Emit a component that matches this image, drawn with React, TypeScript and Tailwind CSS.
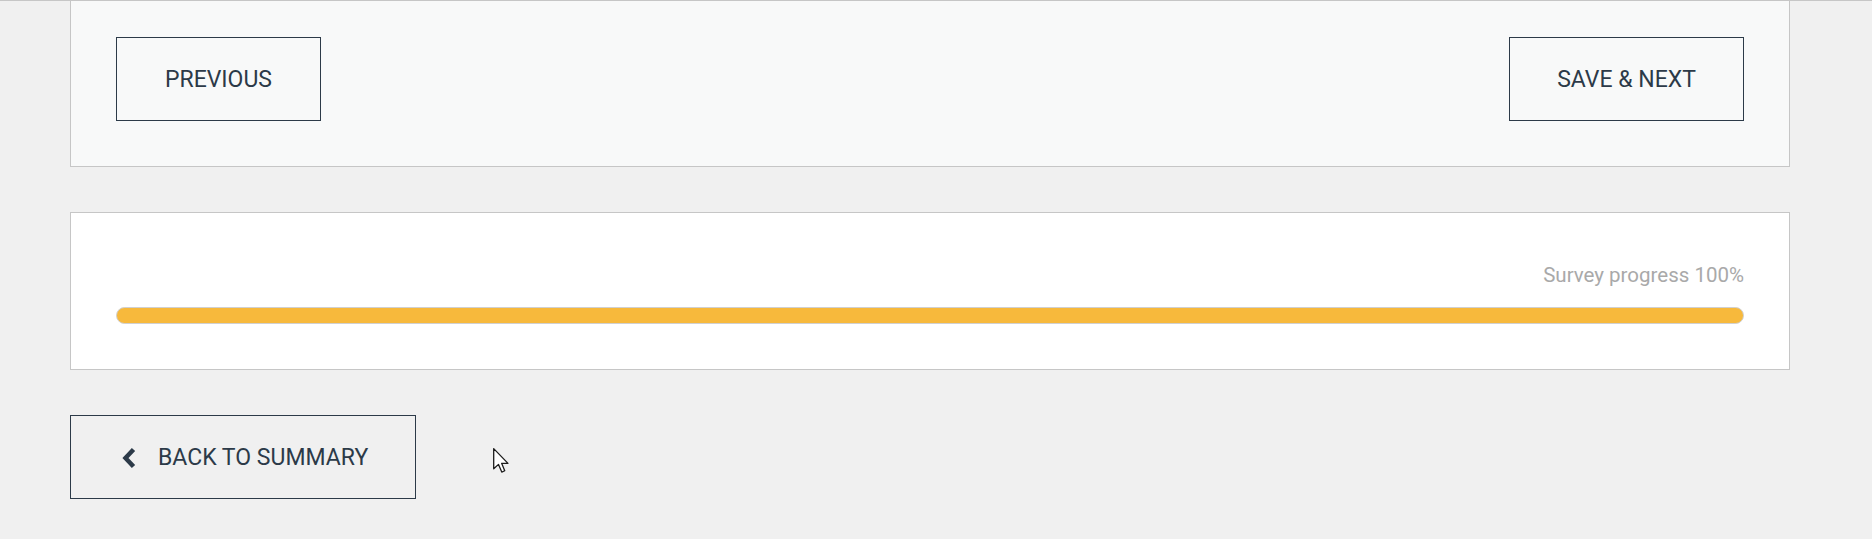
import React from "react";

const font = { fontFamily: "Roboto, 'Open Sans', sans-serif" };

const OutlineButton: React.FC<{ label: string; width: string }> = ({ label, width }) => (
  <button
    className={`flex h-[84px] items-center justify-center border border-[#2c3a48] pt-[2px] text-[23px] text-[#2c3a48] ${width}`}
  >
    {label}
  </button>
);

const Cursor = () => (
  <svg
    className="absolute left-[423px] top-[33px]"
    width="17"
    height="26"
    viewBox="0 0 13 20"
  >
    <path
      d="M0.5 0.5 L0.5 16 L4.2 12.6 L6.7 18.5 L9 17.5 L6.6 11.8 L11.5 11.8 Z"
      fill="#ffffff"
      stroke="#1c1c1c"
      strokeWidth="1"
      strokeLinejoin="round"
    />
  </svg>
);

export default function App() {
  return (
    <div className="min-h-[539px] border-t border-[#c6c6c6] bg-[#f0f0f0]" style={font}>
      <div className="ml-[70px] w-[1720px]">
        {/* step navigation */}
        <div className="flex justify-between border-x border-b border-[#c6c6c6] bg-[#f8f9f9] px-[45px] pt-[36px] pb-[45px]">
          <OutlineButton label="PREVIOUS" width="w-[205px]" />
          <OutlineButton label="SAVE & NEXT" width="w-[235px]" />
        </div>

        {/* progress */}
        <div className="mt-[45px] border border-[#c6c6c6] bg-white px-[45px] pt-[50px] pb-[45px]">
          <div className="text-right text-[20.5px] leading-[24px] text-[#a9a9a9]">Survey progress 100%</div>
          <div className="mt-[20px] h-[17px] rounded-full border border-[#d0d0d0] bg-[#f7b93c]" />
        </div>

        {/* back */}
        <div className="relative mt-[45px] flex">
          <button className="flex h-[84px] w-[346px] items-center border border-[#2c3a48] pl-[50px] pt-[2px] text-[23px] text-[#2c3a48]">
            <svg width="16" height="22" viewBox="0 0 16 22" className="mr-[21px]">
              <polyline
                points="12.5,2.5 4.5,11 12.5,19.5"
                fill="none"
                stroke="#2c3a48"
                strokeWidth="4.5"
              />
            </svg>
            BACK TO SUMMARY
          </button>
          <Cursor />
        </div>
      </div>
    </div>
  );
}
